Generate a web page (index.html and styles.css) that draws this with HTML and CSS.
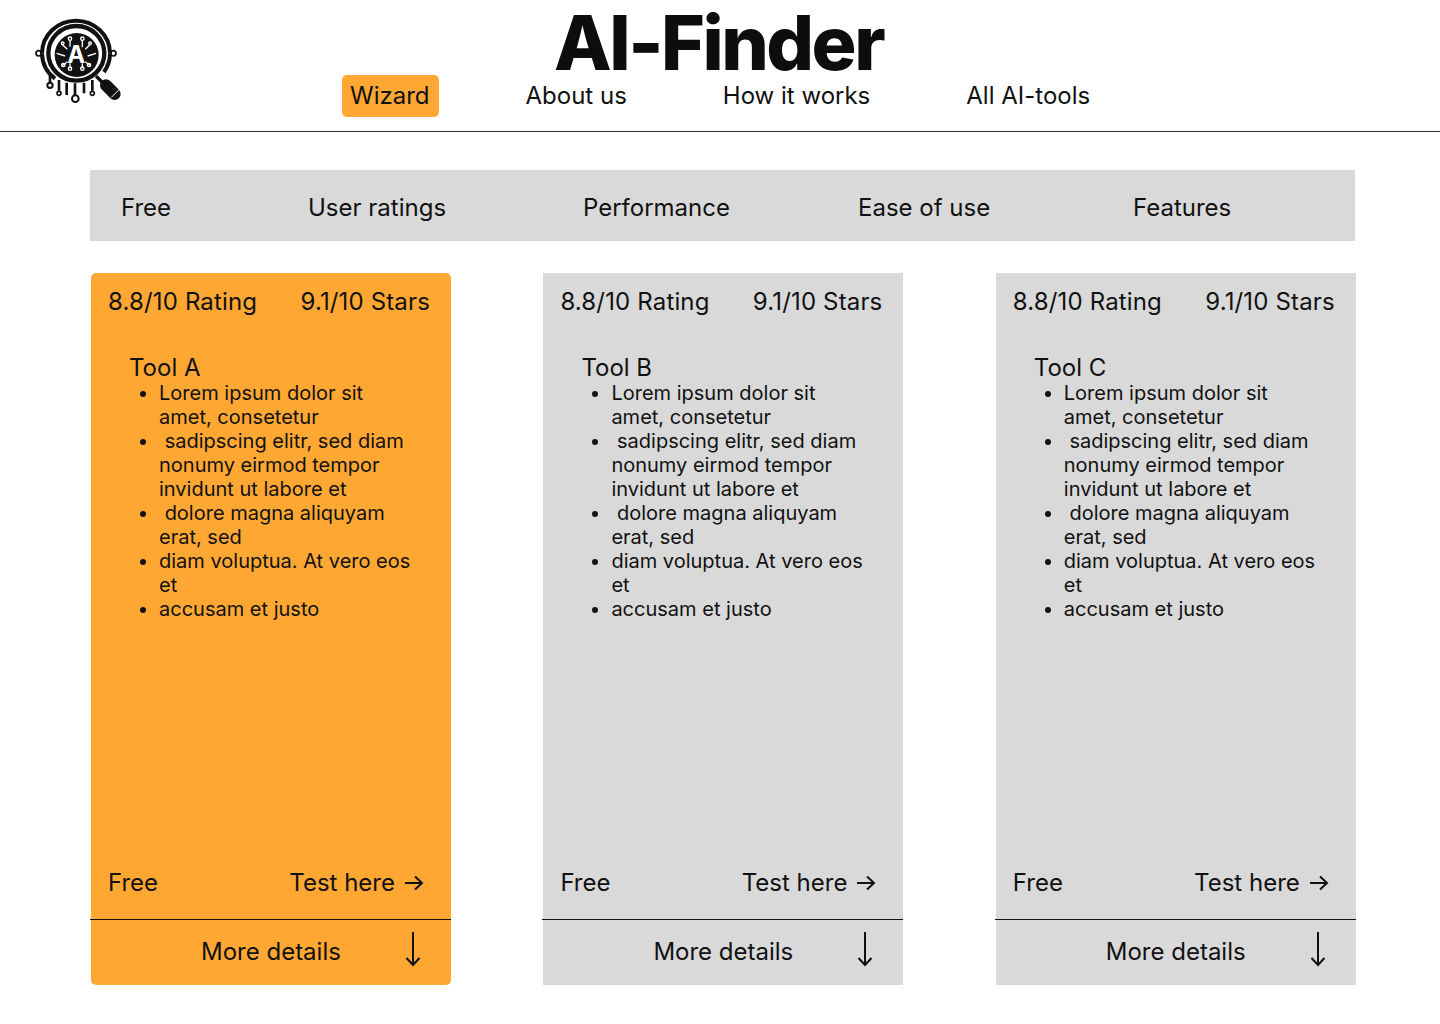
FILE: index.html
```html
<!DOCTYPE html>
<html lang="en">
<head>
  <meta charset="UTF-8">
  <title>AI-Finder</title>
  <link rel="stylesheet" href="styles.css">
</head>
<body>

  <header class="header">
    <svg class="logo" viewBox="0 0 360 360" aria-hidden="true">
      <g fill="none" stroke="#111">
        <path d="M66 160A102 98 0 0 1 270 160" stroke-width="12"/>
        <path d="M66 160A102 98 0 0 0 105 236" stroke-width="12"/>
        <path d="M270 160A102 98 0 0 1 252 216" stroke-width="12"/>
        <ellipse cx="169" cy="160" rx="84" ry="82" stroke-width="13"/>
        <circle cx="56" cy="160" r="8" stroke-width="5"/>
        <circle cx="280" cy="160" r="8" stroke-width="5"/>
        <path d="M90 222V248M117 240V272M140 248V285M165 250V285M192 248V280M217 240V272" stroke-width="8"/>
        <circle cx="90" cy="256" r="8" stroke-width="6"/>
        <circle cx="117" cy="280" r="6" stroke-width="5"/>
        <circle cx="166" cy="296" r="10" stroke-width="6"/>
        <circle cx="217" cy="280" r="6" stroke-width="5"/>
      </g>
      <circle cx="170" cy="165" r="66" fill="#111"/>
      <g fill="none" stroke="#fff" stroke-width="4">
        <path d="M150 122V140M187 120V142M125 132L142 148M212 132L196 148M110 160L135 168M228 160L203 168M125 198L142 185M212 198L196 185M150 205V190M187 205V190"/>
        <circle cx="150" cy="116" r="5"/>
        <circle cx="187" cy="116" r="5"/>
        <circle cx="128" cy="130" r="4"/>
        <circle cx="210" cy="130" r="4"/>
        <circle cx="130" cy="195" r="5"/>
        <circle cx="207" cy="195" r="5"/>
        <circle cx="150" cy="206" r="5"/>
        <circle cx="187" cy="206" r="5"/>
      </g>
      <text class="logo-letter" x="169" y="188" text-anchor="middle">A</text>
      <path d="M228 228L246 246" stroke="#111" stroke-width="10"/>
      <path d="M258 256L284 282" stroke="#111" stroke-width="36" stroke-linecap="round"/>
      <path d="M274 292L298 268" stroke="#fff" stroke-width="3"/>
    </svg>

    <div class="header-main">
      <h1 class="title">AI-Finder</h1>
      <nav class="nav">
        <a class="nav-link active" href="#">Wizard</a>
        <a class="nav-link" href="#">About us</a>
        <a class="nav-link" href="#">How it works</a>
        <a class="nav-link" href="#">All AI-tools</a>
      </nav>
    </div>
  </header>

  <main class="content">
    <div class="filters">
      <span>Free</span>
      <span>User ratings</span>
      <span>Performance</span>
      <span>Ease of use</span>
      <span>Features</span>
    </div>

    <div class="cards">
      <section class="card highlight">
        <div class="card-head">
          <span>8.8/10 Rating</span>
          <span>9.1/10 Stars</span>
        </div>
        <div class="card-body">
          <h2>Tool A</h2>
          <ul>
            <li>Lorem ipsum dolor sit amet, consetetur</li>
            <li>&nbsp;sadipscing elitr, sed diam nonumy eirmod tempor invidunt ut labore et</li>
            <li>&nbsp;dolore magna aliquyam erat, sed</li>
            <li>diam voluptua. At vero eos et</li>
            <li>accusam et justo</li>
          </ul>
        </div>
        <div class="card-price">
          <span>Free</span>
          <a class="test-link" href="#">Test here
            <svg class="arrow-right" viewBox="0 0 20 16"><path d="M1 8H18M11 1.5L18 8L11 14.5"/></svg>
          </a>
        </div>
        <div class="card-more">
          <span>More details</span>
          <svg class="arrow-down" viewBox="0 0 16 36"><path d="M8 1V34M1.5 27L8 34L14.5 27"/></svg>
        </div>
      </section>

      <section class="card">
        <div class="card-head">
          <span>8.8/10 Rating</span>
          <span>9.1/10 Stars</span>
        </div>
        <div class="card-body">
          <h2>Tool B</h2>
          <ul>
            <li>Lorem ipsum dolor sit amet, consetetur</li>
            <li>&nbsp;sadipscing elitr, sed diam nonumy eirmod tempor invidunt ut labore et</li>
            <li>&nbsp;dolore magna aliquyam erat, sed</li>
            <li>diam voluptua. At vero eos et</li>
            <li>accusam et justo</li>
          </ul>
        </div>
        <div class="card-price">
          <span>Free</span>
          <a class="test-link" href="#">Test here
            <svg class="arrow-right" viewBox="0 0 20 16"><path d="M1 8H18M11 1.5L18 8L11 14.5"/></svg>
          </a>
        </div>
        <div class="card-more">
          <span>More details</span>
          <svg class="arrow-down" viewBox="0 0 16 36"><path d="M8 1V34M1.5 27L8 34L14.5 27"/></svg>
        </div>
      </section>

      <section class="card">
        <div class="card-head">
          <span>8.8/10 Rating</span>
          <span>9.1/10 Stars</span>
        </div>
        <div class="card-body">
          <h2>Tool C</h2>
          <ul>
            <li>Lorem ipsum dolor sit amet, consetetur</li>
            <li>&nbsp;sadipscing elitr, sed diam nonumy eirmod tempor invidunt ut labore et</li>
            <li>&nbsp;dolore magna aliquyam erat, sed</li>
            <li>diam voluptua. At vero eos et</li>
            <li>accusam et justo</li>
          </ul>
        </div>
        <div class="card-price">
          <span>Free</span>
          <a class="test-link" href="#">Test here
            <svg class="arrow-right" viewBox="0 0 20 16"><path d="M1 8H18M11 1.5L18 8L11 14.5"/></svg>
          </a>
        </div>
        <div class="card-more">
          <span>More details</span>
          <svg class="arrow-down" viewBox="0 0 16 36"><path d="M8 1V34M1.5 27L8 34L14.5 27"/></svg>
        </div>
      </section>
    </div>
  </main>

</body>
</html>
```

FILE: styles.css
```css
body {
  font-family: 'Inter', sans-serif;
  background: #fff;
  color: #111;
  margin: 0;
}

a {
  color: inherit;
  text-decoration: none;
}

.header {
  display: flex;
  height: 131px;
  border-bottom: 1px solid #333;
}

.logo {
  width: 120px;
  height: 120px;
  margin-left: 20px;
  flex-shrink: 0;
}

.logo-letter {
  font-family: 'Inter', sans-serif;
  font-size: 72px;
  font-weight: 700;
  fill: #fff;
}

.header-main {
  margin-left: 202px;
}

.title {
  margin: 0 0 0 212px;
  padding-top: 10px;
  font-size: 75px;
  line-height: 65px;
  font-weight: 800;
  letter-spacing: -2.5px;
  color: #0d0d0d;
}

.nav {
  display: flex;
  gap: 80px;
  font-size: 24px;
}

.nav-link {
  padding: 6px 8px;
  line-height: 30px;
  border-radius: 5px;
}

.nav-link.active {
  margin-right: -1px;
  padding-right: 9px;
  background: #ffa733;
}

.content {
  padding: 38px 85px 0 90px;
}

.filters {
  display: grid;
  grid-template-columns: 187px 275px 275px 275px 1fr;
  align-items: center;
  height: 71px;
  padding: 4px 0 0 31px;
  box-sizing: border-box;
  background: #d9d9d9;
  font-size: 24px;
}

.cards {
  display: flex;
  gap: 92.4px;
  margin: 32px 0 0 1px;
}

.card {
  display: flex;
  flex-direction: column;
  flex-shrink: 0;
  width: 360px;
  height: 712px;
  background: #d9d9d9;
}

.card.highlight {
  background: #ffa733;
  border-radius: 5px;
}

.card-head {
  display: flex;
  justify-content: space-between;
  padding: 14px 21px 0 17px;
  font-size: 24px;
  line-height: 29px;
  letter-spacing: 0.15px;
}

.card-body {
  flex: 1;
  padding: 38px 40px 0 38px;
}

.card-body h2 {
  margin: 0;
  font-size: 24px;
  font-weight: 400;
  line-height: 27px;
}

.card-body ul {
  margin: 0;
  padding-left: 30px;
  font-size: 20px;
  line-height: 24px;
}

.card-price {
  display: flex;
  justify-content: space-between;
  align-items: center;
  height: 73px;
  padding: 0 27px 0 17px;
  font-size: 24px;
}

.test-link {
  display: flex;
  align-items: center;
  gap: 9px;
}

.arrow-right {
  width: 20px;
  height: 16px;
}

.card-more {
  display: flex;
  justify-content: space-between;
  align-items: center;
  height: 66px;
  margin-left: -1px;
  padding: 0 30px 3px 111px;
  box-sizing: border-box;
  border-top: 1px solid #111;
  font-size: 24px;
}

.arrow-down {
  width: 16px;
  height: 36px;
  margin-bottom: 4px;
}

.arrow-right path,
.arrow-down path {
  fill: none;
  stroke: #111;
  stroke-width: 2;
}
```
